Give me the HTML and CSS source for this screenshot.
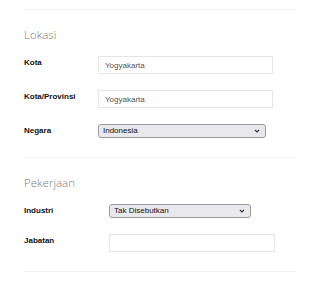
FILE: index.html
```html
<!DOCTYPE html>
<html lang="id">
<head>
<meta charset="utf-8">
<title>Profil</title>
<link rel="stylesheet" href="styles.css">
</head>
<body>
<div class="page">
  <div class="rule"></div>
  <section class="sec sec-lokasi">
    <h2 class="sec-title">Lokasi</h2>
    <div class="row">
      <label class="lbl">Kota</label>
      <input class="txt txt-a" type="text" value="Yogyakarta">
    </div>
    <div class="row">
      <label class="lbl">Kota/Provinsi</label>
      <input class="txt txt-a" type="text" value="Yogyakarta">
    </div>
    <div class="row">
      <label class="lbl">Negara</label>
      <div class="sel sel-a"><span class="sel-text">Indonesia</span><svg class="chev" width="6" height="4" viewBox="0 0 6 4"><path d="M1 1 L3 3 L5 1" fill="none" stroke="#333" stroke-width="1.1"/></svg></div>
    </div>
  </section>
  <div class="rule"></div>
  <section class="sec sec-kerja">
    <h2 class="sec-title">Pekerjaan</h2>
    <div class="row">
      <label class="lbl">Industri</label>
      <div class="sel sel-b"><span class="sel-text">Tak Disebutkan</span><svg class="chev" width="6" height="4" viewBox="0 0 6 4"><path d="M1 1 L3 3 L5 1" fill="none" stroke="#333" stroke-width="1.1"/></svg></div>
    </div>
    <div class="row">
      <label class="lbl">Jabatan</label>
      <input class="txt txt-b" type="text" value="">
    </div>
  </section>
  <div class="rule"></div>
</div>
</body>
</html>
```

FILE: styles.css
```css
* { box-sizing: border-box; }
html, body { margin: 0; padding: 0; background: #fff; }
body { font-family: "Liberation Sans", Arial, sans-serif; }
.page { padding: 9px 24px 0 24px; width: 320px; }
.rule { height: 1px; background: #efefef; width: 272px; }
.sec { padding-top: 17px; padding-bottom: 19px; }
.sec-title {
  margin: 0 0 13px 0;
  font-family: "Open Sans", sans-serif;
  font-weight: 300;
  font-size: 11.5px;
  line-height: 16px;
  color: #7a7a7a;
}
.row { display: grid; align-items: start; margin-bottom: 16px; }
.row:last-child { margin-bottom: 0; }
.sec-lokasi .row { grid-template-columns: 74px auto; }
.sec-kerja .row { grid-template-columns: 85px auto; }
.lbl {
  font-size: 8px;
  font-weight: bold;
  line-height: 14px;
  color: #111;
}
.txt {
  height: 18px;
  border: 1px solid #e6e6e6;
  background: #fff;
  font-family: "Liberation Sans", Arial, sans-serif;
  font-size: 8px;
  color: #555;
  padding: 0 6px;
  margin: 0;
  outline: none;
}
.txt-a { width: 175px; }
.txt-b { width: 166px; }
.sel {
  position: relative;
  height: 14px;
  border: 1px solid #9a9aa3;
  border-radius: 3px;
  background: #e9e9ed;
  font-size: 8px;
  line-height: 12px;
  color: #111;
  padding-left: 4px;
  display: flex;
  align-items: center;
}
.sel-a { width: 168px; }
.sel-b { width: 142px; }
.chev { position: absolute; right: 5px; top: 4px; }
```
